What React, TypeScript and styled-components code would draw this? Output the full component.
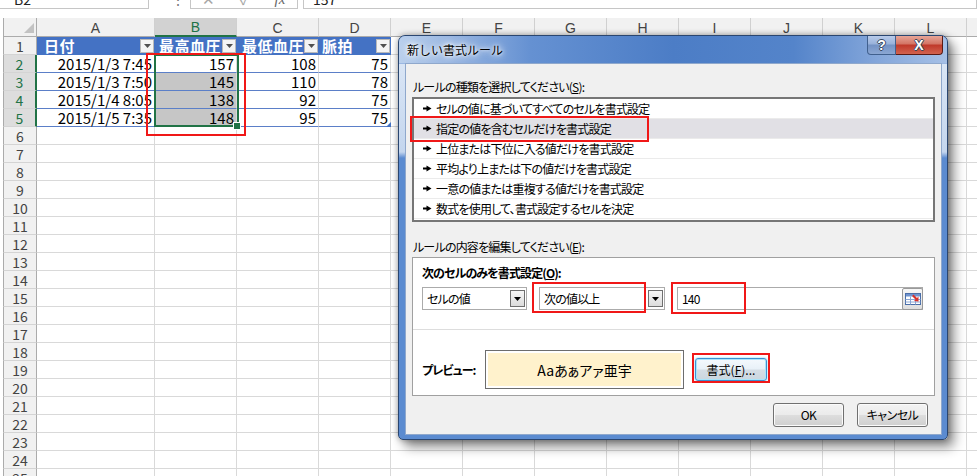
import React from "react";
import styled, { createGlobalStyle, css } from "styled-components";

const JP = `"Noto Sans CJK JP", "Noto Sans", sans-serif`;

const GlobalStyle = createGlobalStyle`
  html, body { margin: 0; padding: 0; background: #ffffff; }
  body { font-family: ${JP}; }
  #root { width: 977px; height: 476px; }
`;

const Page = styled.div`
  position: relative;
  width: 977px;
  height: 476px;
  overflow: hidden;
  background: #fff;
`;

/* ---------- formula bar (cut off at top) ---------- */
const FormulaBar = styled.div`
  display: flex;
  align-items: flex-end;
  height: 9px;
  overflow: hidden;
`;
const BarBox = styled.div<{ $w?: number; $grow?: boolean; $ml?: number; $pl?: number }>`
  box-sizing: border-box;
  flex: ${(p) => (p.$grow ? "1 1 auto" : "none")};
  width: ${(p) => (p.$w ? `${p.$w}px` : "auto")};
  height: 20px;
  margin-left: ${(p) => p.$ml ?? 0}px;
  padding-left: ${(p) => p.$pl ?? 0}px;
  border: 1px solid #c6c6c6;
  background: #fff;
  display: flex;
  align-items: center;
  font: 14px/18px ${JP};
  color: #222;
`;
const Dots = styled.div`
  flex: none;
  width: 41px;
  height: 20px;
  padding-left: 22px;
  box-sizing: border-box;
  font: 14px/20px ${JP};
  color: #777;
`;
const BarGlyph = styled.span<{ $ml: number; $italic?: boolean; $c: string }>`
  display: inline-block;
  width: 18px;
  margin-left: ${(p) => p.$ml}px;
  text-align: center;
  color: ${(p) => p.$c};
  font: ${(p) => (p.$italic ? "italic 15px/18px 'Liberation Serif', serif" : `15px/18px ${JP}`)};
`;

/* ---------- sheet ---------- */
const Sheet = styled.div<{ $cols: string }>`
  display: grid;
  grid-template-columns: ${(p) => p.$cols};
  grid-template-rows: 19px;
  grid-auto-rows: 18px;
  margin: 9px 0 0 3px;
`;
const Corner = styled.div`
  box-sizing: border-box;
  border-left: 1px solid #ababab;
  border-right: 1px solid #ababab;
  border-bottom: 1px solid #ababab;
  background: #f1f1f1;
  display: flex;
  align-items: flex-end;
  justify-content: flex-end;
  padding: 0 2px 3px 0;
`;
const ColHead = styled.div<{ $active?: boolean }>`
  box-sizing: border-box;
  display: flex;
  align-items: center;
  justify-content: center;
  background: ${(p) => (p.$active ? "#d2d2d2" : "#f1f1f1")};
  border-right: 1px solid #d0d0d0;
  border-bottom: ${(p) => (p.$active ? "2px solid #217346" : "1px solid #ababab")};
  color: ${(p) => (p.$active ? "#217346" : "#444")};
  font: 14px/16px "Liberation Sans", ${JP};
  padding-top: 1px;
`;
const RowHead = styled.div<{ $active?: boolean }>`
  box-sizing: border-box;
  display: flex;
  align-items: center;
  justify-content: center;
  background: ${(p) => (p.$active ? "#dddddd" : "#f1f1f1")};
  border-left: 1px solid #ababab;
  border-right: ${(p) => (p.$active ? "2px solid #217346" : "1px solid #ababab")};
  border-bottom: 1px solid #d4d4d4;
  color: ${(p) => (p.$active ? "#217346" : "#444")};
  font: 14px/16px ${JP};
`;
type Kind = "head" | "data" | "plain";
const Cell = styled.div<{ $kind: Kind; $sel?: boolean; $pl?: number }>`
  box-sizing: border-box;
  min-width: 0;
  display: flex;
  align-items: center;
  justify-content: flex-end;
  padding: 0 2px 0 0;
  border-right: 1px solid #d9d9d9;
  border-bottom: 1px solid #d9d9d9;
  background: #fff;
  color: #000;
  font: 15px/17px ${JP};
  white-space: nowrap;
  ${(p) =>
    p.$kind === "head" &&
    css`
      background: #4472c4;
      color: #fff;
      font-weight: 700;
      letter-spacing: 0.5px;
      justify-content: space-between;
      padding: 0 0 0 ${p.$pl ?? 5}px;
      border-right-color: #4472c4;
      border-bottom-color: #4472c4;
    `}
  ${(p) =>
    p.$kind === "data" &&
    css`
      border-bottom-color: #5b7fc8;
      background: ${p.$sel ? "#c6c6c6" : "#fff"};
    `}
`;
const HeadLabel = styled.span`
  overflow: hidden;
`;
const FilterBtn = styled.span`
  box-sizing: border-box;
  flex: none;
  width: 14px;
  height: 14px;
  background: #f4f4f4;
  border: 1px solid #b9b9b9;
  display: flex;
  align-items: center;
  justify-content: center;
`;

/* overlays on the sheet */
const SelectionBox = styled.div`
  position: absolute;
  left: 154px;
  top: 54px;
  width: 85px;
  height: 73px;
  box-sizing: border-box;
  border: 2px solid #217346;
  pointer-events: none;
`;
const FillHandle = styled.div`
  position: absolute;
  left: 234px;
  top: 123px;
  width: 6px;
  height: 6px;
  background: #217346;
  outline: 1px solid #fff;
`;
const ResizeHandle = styled.div`
  position: absolute;
  left: 386px;
  top: 122px;
  width: 0;
  height: 0;
  border-left: 5px solid transparent;
  border-bottom: 5px solid #4472c4;
`;
const Mark = styled.div<{ $x: number; $y: number; $w: number; $h: number }>`
  position: absolute;
  left: ${(p) => p.$x}px;
  top: ${(p) => p.$y}px;
  width: ${(p) => p.$w}px;
  height: ${(p) => p.$h}px;
  box-sizing: border-box;
  border: 2px solid #f01818;
  pointer-events: none;
`;

/* ---------- dialog ---------- */
const Window = styled.div`
  position: absolute;
  left: 398px;
  top: 35px;
  width: 550px;
  height: 405px;
  box-sizing: border-box;
  display: flex;
  flex-direction: column;
  border: 1px solid #2a4670;
  border-radius: 7px 7px 5px 5px;
  padding: 0 5px 4px 6px;
  background: linear-gradient(
    180deg,
    #5a89cf 0,
    #5a89cf 27px,
    #d9e5f5 28px,
    #c4d6ee 116px,
    #5b8bd0 122px,
    #5b8bd0 100%
  );
  box-shadow: 0 0 6px rgba(0, 0, 0, 0.35), 6px 7px 12px rgba(0, 0, 0, 0.45);
`;
const TitleBar = styled.div`
  flex: none;
  height: 27px;
  margin: 0 -5px 0 -6px;
  padding: 0 4px 0 8px;
  display: flex;
  align-items: flex-start;
  border-radius: 6px 6px 0 0;
  background: linear-gradient(
    90deg,
    #b9cfec 0%,
    #97b5e1 10%,
    #6591d2 24%,
    #4c7dc6 50%,
    #5484ca 72%,
    #86a8db 88%,
    #a6c0e6 100%
  );
`;
const Title = styled.div`
  align-self: center;
  font: 12px/16px ${JP};
  color: #000;
  text-shadow: 0 0 6px #fff, 0 0 3px #fff, 0 0 10px #fff;
`;
const Caption = styled.div`
  margin-left: auto;
  display: flex;
`;
const CapBtn = styled.div<{ $close?: boolean }>`
  box-sizing: border-box;
  height: 19px;
  width: ${(p) => (p.$close ? 47 : 29)}px;
  display: flex;
  align-items: center;
  justify-content: center;
  border: 1px solid ${(p) => (p.$close ? "#5a1a14" : "#40608e")};
  border-top: none;
  ${(p) => (p.$close ? "border-left: none;" : "")}
  border-radius: ${(p) => (p.$close ? "0 0 4px 0" : "0 0 0 4px")};
  background: ${(p) =>
    p.$close
      ? "linear-gradient(180deg, #e7a597 0%, #d47767 42%, #c03a2b 52%, #d2634f 100%)"
      : "linear-gradient(180deg, #b8cbea 0%, #9ab3db 42%, #7493c5 52%, #8ba7d3 100%)"};
  color: #fff;
  font: bold 14px/14px "Liberation Sans", sans-serif;
  text-shadow: -1px 0 #37475e, 1px 0 #37475e, 0 -1px #37475e, 0 1px #37475e;
`;
const Client = styled.div`
  flex: 1;
  box-sizing: border-box;
  display: flex;
  flex-direction: column;
  background: #f0f0f0;
  border: 1px solid #8fa8cc;
  padding: 15px 6px 0 6px;
  font: 12px/16px ${JP};
  font-feature-settings: "palt";
  letter-spacing: -0.8px;
  color: #000;
`;
const SectionLabel = styled.div<{ $mt: number }>`
  margin-top: ${(p) => p.$mt}px;
  padding-left: 1px;
  height: 16px;
`;
const ListBox = styled.div`
  box-sizing: border-box;
  margin-top: 2px;
  height: 125px;
  border: 2px solid #767676;
  background: #fff;
`;
const ListItem = styled.div<{ $selected?: boolean }>`
  box-sizing: border-box;
  height: 20px;
  display: flex;
  align-items: center;
  gap: 4px;
  padding-left: 9px;
  border-bottom: 1px solid #ebebeb;
  background: ${(p) => (p.$selected ? "#e1e0e5" : "#fff")};
`;
const EditBox = styled.div`
  box-sizing: border-box;
  margin-top: 2px;
  height: 139px;
  border: 1px solid #a0a0a0;
  background: #fff;
  display: flex;
  flex-direction: column;
`;
const BoldLabel = styled.div<{ $w?: number }>`
  font-weight: 700;
  letter-spacing: -0.9px;
  ${(p) => (p.$w ? `width: ${p.$w}px; flex: none;` : "")}
`;
const BoldRow = styled.div`
  margin-top: 7px;
  padding-left: 9px;
`;
const ControlRow = styled.div`
  margin-top: 6px;
  padding-left: 9px;
  display: flex;
  gap: 12px;
  height: 23px;
`;
const Field = styled.div<{ $w: number }>`
  box-sizing: border-box;
  width: ${(p) => p.$w}px;
  height: 23px;
  border: 1px solid #ababab;
  background: #fff;
  display: flex;
  align-items: center;
  padding-left: 4px;
`;
const ComboBtn = styled.div`
  box-sizing: border-box;
  margin-left: auto;
  margin-right: 1px;
  width: 15px;
  height: 17px;
  border: 1px solid #6f6f6f;
  background: linear-gradient(180deg, #f6f6f6, #dcdcdc);
  display: flex;
  align-items: center;
  justify-content: center;
`;
const RefBtn = styled.div`
  box-sizing: border-box;
  margin-left: auto;
  margin-right: -1px;
  width: 21px;
  height: 22px;
  border: 1px solid #9a9a9a;
  border-radius: 2px;
  background: linear-gradient(180deg, #f7f7f7, #dedede);
  display: flex;
  align-items: center;
  justify-content: center;
`;
const Divider = styled.div`
  margin-top: 19px;
  height: 1px;
  background: #dddddd;
`;
const PreviewRow = styled.div`
  margin-top: 20px;
  padding-left: 9px;
  display: flex;
  align-items: center;
  height: 39px;
`;
const PreviewBox = styled.div`
  box-sizing: border-box;
  width: 199px;
  height: 39px;
  border: 1px solid #6d6d6d;
  padding: 2px;
  background: #fff;
  display: flex;
`;
const PreviewInner = styled.div`
  flex: 1;
  background: #fff2cc;
  display: flex;
  align-items: center;
  justify-content: center;
  font: 14px/18px ${JP};
  font-feature-settings: "palt";
  letter-spacing: 0;
`;
const FormatBtn = styled.div`
  box-sizing: border-box;
  margin-left: 11px;
  width: 72px;
  height: 23px;
  border: 1px solid #3c8fd0;
  border-radius: 3px;
  background: linear-gradient(180deg, #f4f9fd 0%, #e8f1f8 48%, #d4dde5 52%, #cbd6df 100%);
  box-shadow: inset 0 0 0 1px #a9e4fa, 0 0 2px #66c7f0;
  display: flex;
  align-items: center;
  justify-content: center;
  letter-spacing: 0;
`;
const Footer = styled.div`
  margin-top: 7px;
  padding-right: 7px;
  display: flex;
  justify-content: flex-end;
  gap: 13px;
`;
const Button = styled.div`
  box-sizing: border-box;
  width: 71px;
  height: 24px;
  border: 1px solid #707070;
  border-radius: 3px;
  background: linear-gradient(180deg, #f3f3f3 0%, #ebebeb 48%, #dddddd 52%, #cfcfcf 100%);
  box-shadow: inset 0 0 0 1px #fbfbfb;
  display: flex;
  align-items: center;
  justify-content: center;
  letter-spacing: -0.5px;
`;

/* ---------- icons ---------- */
const CornerTri = () => (
  <svg width="10" height="10" viewBox="0 0 10 10">
    <path d="M10 0V10H0Z" fill="#c2c2c2" />
  </svg>
);
const DownTri = ({ c = "#000" }: { c?: string }) => (
  <svg width="7" height="4" viewBox="0 0 7 4">
    <path d="M0 0H7L3.5 4Z" fill={c} />
  </svg>
);
const ItemArrow = () => (
  <svg width="9" height="7" viewBox="0 0 9 7">
    <rect x="0" y="2.5" width="4" height="2" fill="#000" />
    <path d="M3.5 0.5L8.5 3.5L3.5 6.5Z" fill="#000" />
  </svg>
);
const RefIcon = () => (
  <svg width="16" height="14" viewBox="0 0 16 14">
    <rect x="0.5" y="1.5" width="15" height="11" fill="#fff" stroke="#4a6ea8" />
    <rect x="1" y="2" width="14" height="2.5" fill="#6f93cf" />
    <path d="M0.5 7.5H15.5M0.5 10H15.5M5.5 4.5V12.5M10.5 4.5V12.5" stroke="#8aa6d4" />
    <path d="M13.5 9.5L13.5 4.5L12 6L8.5 2.5L7 4L10.5 7.5L9 9Z" fill="#d8322c" />
  </svg>
);

/* ---------- data ---------- */
const LETTERS = ["A", "B", "C", "D", "E", "F", "G", "H", "I", "J", "K", "L", "M"];
const WIDTHS = [34, 118, 82, 82, 72, 72, 72, 72, 72, 72, 72, 72, 72, 20];
const HEAD = ["日付", "最高血圧", "最低血圧", "脈拍"];
const HEAD_PAD = [7, 4, 5, 3];
const DATA = [
  ["2015/1/3 7:45", "157", "108", "75"],
  ["2015/1/3 7:50", "145", "110", "78"],
  ["2015/1/4 8:05", "138", "92", "75"],
  ["2015/1/5 7:35", "148", "95", "75"],
];
const RULES = [
  "セルの値に基づいてすべてのセルを書式設定",
  "指定の値を含むセルだけを書式設定",
  "上位または下位に入る値だけを書式設定",
  "平均より上または下の値だけを書式設定",
  "一意の値または重複する値だけを書式設定",
  "数式を使用して、書式設定するセルを決定",
];

export default function App() {
  return (
    <>
      <GlobalStyle />
      <Page>
        <FormulaBar>
          <BarBox $w={149} $pl={14} style={{ borderLeft: "none" }}>
            B2
          </BarBox>
          <Dots>⋮</Dots>
          <BarBox $w={108} $pl={8}>
            <BarGlyph $ml={0} $c="#a6a6a6">✕</BarGlyph>
            <BarGlyph $ml={19} $c="#a6a6a6">✓</BarGlyph>
            <BarGlyph $ml={17} $c="#666" $italic>
              fx
            </BarGlyph>
          </BarBox>
          <BarBox $grow $ml={5} $pl={9}>
            157
          </BarBox>
        </FormulaBar>

        <Sheet $cols={WIDTHS.map((w) => `${w}px`).join(" ")}>
          <Corner>
            <CornerTri />
          </Corner>
          {LETTERS.map((l, i) => (
            <ColHead key={l} $active={i === 1}>
              {l === "M" ? "" : l}
            </ColHead>
          ))}
          {Array.from({ length: 25 }, (_, ri) => {
            const r = ri + 1;
            return (
              <React.Fragment key={r}>
                <RowHead $active={r >= 2 && r <= 5}>{r}</RowHead>
                {LETTERS.map((l, ci) => {
                  if (r === 1 && ci < 4)
                    return (
                      <Cell key={l} $kind="head" $pl={HEAD_PAD[ci]}>
                        <HeadLabel>{HEAD[ci]}</HeadLabel>
                        <FilterBtn>
                          <DownTri c="#505050" />
                        </FilterBtn>
                      </Cell>
                    );
                  if (r >= 2 && r <= 5 && ci < 4)
                    return (
                      <Cell key={l} $kind="data" $sel={ci === 1 && r >= 3}>
                        {DATA[r - 2][ci]}
                      </Cell>
                    );
                  return <Cell key={l} $kind="plain" />;
                })}
              </React.Fragment>
            );
          })}
        </Sheet>

        <SelectionBox />
        <FillHandle />
        <ResizeHandle />
        <Mark $x={146} $y={53} $w={100} $h={83} />

        <Window>
          <TitleBar>
            <Title>新しい書式ルール</Title>
            <Caption>
              <CapBtn>?</CapBtn>
              <CapBtn $close>X</CapBtn>
            </Caption>
          </TitleBar>
          <Client>
            <SectionLabel $mt={0}>
              ルールの種類を選択してください(<u>S</u>):
            </SectionLabel>
            <ListBox>
              {RULES.map((t, i) => (
                <ListItem key={t} $selected={i === 1}>
                  <ItemArrow />
                  <span>{t}</span>
                </ListItem>
              ))}
            </ListBox>
            <SectionLabel $mt={17}>
              ルールの内容を編集してください(<u>E</u>):
            </SectionLabel>
            <EditBox>
              <BoldRow>
                <BoldLabel>
                  次のセルのみを書式設定(<u>O</u>):
                </BoldLabel>
              </BoldRow>
              <ControlRow>
                <Field $w={105}>
                  セルの値
                  <ComboBtn>
                    <DownTri />
                  </ComboBtn>
                </Field>
                <Field $w={126}>
                  次の値以上
                  <ComboBtn>
                    <DownTri />
                  </ComboBtn>
                </Field>
                <Field $w={246}>
                  140
                  <RefBtn>
                    <RefIcon />
                  </RefBtn>
                </Field>
              </ControlRow>
              <Divider />
              <PreviewRow>
                <BoldLabel $w={63}>プレビュー:</BoldLabel>
                <PreviewBox>
                  <PreviewInner>Aaあぁアァ亜宇</PreviewInner>
                </PreviewBox>
                <FormatBtn>
                  書式(<u>F</u>)...
                </FormatBtn>
              </PreviewRow>
            </EditBox>
            <Footer>
              <Button>OK</Button>
              <Button>キャンセル</Button>
            </Footer>
          </Client>
        </Window>

        <Mark $x={410} $y={116} $w={239} $h={26} />
        <Mark $x={532} $y={282} $w={114} $h={31} />
        <Mark $x={671} $y={282} $w={75} $h={32} />
        <Mark $x={692} $y={353} $w={78} $h={30} />
      </Page>
    </>
  );
}
